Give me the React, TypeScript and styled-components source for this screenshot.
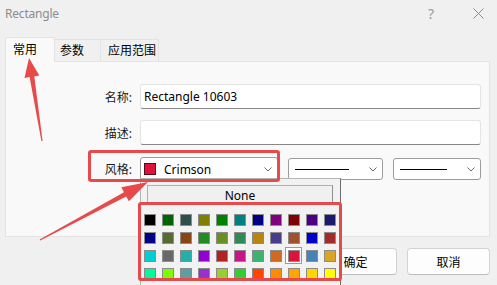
import styled, { createGlobalStyle } from "styled-components";

const GlobalStyle = createGlobalStyle`
  body {
    margin: 0;
    background: #f0f0f0;
    font-family: "Noto Sans", "Noto Sans CJK SC", sans-serif;
  }
`;

const PALETTE = [
  ["#000000", "#006400", "#2F4F4F", "#808000", "#008000", "#008080", "#000080", "#800080", "#800000", "#4B0082", "#191970"],
  ["#00008B", "#556B2F", "#8B4513", "#228B22", "#6B8E23", "#2E8B57", "#B8860B", "#483D8B", "#A0522D", "#0000CD", "#A52A2A"],
  ["#00CED1", "#696969", "#20B2AA", "#9400D3", "#B22222", "#C71585", "#3CB371", "#D2691E", "#DC143C", "#4682B4", "#DAA520"],
  ["#00FA9A", "#7CFC00", "#5F9EA0", "#9932CC", "#9ACD32", "#32CD32", "#FF4500", "#FF8C00", "#FFA500", "#FFD700", "#FFFF00"],
];
const SELECTED = "#DC143C";
const RED = "#e64a4a";

const Dialog = styled.div`
  position: relative;
  width: 497px;
  height: 285px;
  overflow: hidden;
  background: #f0f0f0;
  color: #000;
`;
const TitleBar = styled.div`
  height: 27px;
  display: flex;
  align-items: center;
  padding: 0 13px 0 5px;
`;
const Title = styled.span`
  flex: 1;
  font-size: 12px;
  letter-spacing: -0.2px;
  color: #8c8c8c;
`;
const HelpBtn = styled.span`
  width: 12px;
  margin-right: 36px;
  text-align: center;
  font-size: 14px;
  color: #9a9a9a;
`;
const TabRow = styled.div`
  display: flex;
  align-items: flex-end;
  height: 24px;
  margin-top: 10px;
  padding-left: 5px;
`;
const Tab = styled.div<{ $active?: boolean; $w: number; $pad: number }>`
  position: relative;
  box-sizing: border-box;
  width: ${(p) => p.$w}px;
  height: ${(p) => (p.$active ? 25 : 22)}px;
  margin-bottom: ${(p) => (p.$active ? -1 : 0)}px;
  margin-left: ${(p) => (p.$active ? 0 : -1)}px;
  padding-left: ${(p) => p.$pad}px;
  display: flex;
  align-items: center;
  border: 1px solid #e3e3e3;
  border-bottom: none;
  background: ${(p) => (p.$active ? "#f9f9f9" : "#f0f0f0")};
  z-index: ${(p) => (p.$active ? 1 : 0)};
  font-size: 12px;
  padding-bottom: ${(p) => (p.$active ? 3 : 1)}px;
`;
const Panel = styled.div`
  box-sizing: border-box;
  height: 176px;
  margin: 0 7px 0 5px;
  padding: 22px 10px 0 0;
  border: 1px solid #e3e3e3;
  background: #f9f9f9;
`;
const Form = styled.div`
  display: grid;
  grid-template-columns: 126px 1fr;
  column-gap: 8px;
  grid-template-rows: 25px 25px 26px;
  row-gap: 11px;
  & > :nth-child(4) {
    margin-bottom: -2px;
  }
`;
const Label = styled.label`
  align-self: center;
  text-align: right;
  font-size: 12px;
  color: #1a1a1a;
`;
const TextField = styled.div`
  box-sizing: border-box;
  height: 25px;
  padding: 0 0 0 3px;
  display: flex;
  align-items: center;
  background: #fff;
  border: 1px solid #e5e5e5;
  border-bottom-color: #868686;
  border-radius: 3px;
  font-size: 12px;
`;
const ComboRow = styled.div`
  display: flex;
  align-items: center;
  gap: 10px;
`;
const Combo = styled.div<{ $w: number; $h: number }>`
  box-sizing: border-box;
  width: ${(p) => p.$w}px;
  height: ${(p) => p.$h}px;
  display: flex;
  align-items: center;
  gap: 8px;
  padding: 0 5px 0 3px;
  background: #fff;
  border: 1px solid #9c9c9c;
  border-radius: 3px;
  font-size: 12px;
`;
const ComboSwatch = styled.span<{ $c: string }>`
  width: 12px;
  height: 12px;
  box-sizing: border-box;
  background: ${(p) => p.$c};
  border: 1px solid #5a0a18;
`;
const ComboText = styled.span`
  flex: 1;
`;
const LineSample = styled.span`
  flex: 1;
  height: 1px;
  margin: 0 12px 0 3px;
  background: #000;
`;
const ButtonRow = styled.div`
  display: flex;
  justify-content: flex-end;
  gap: 10px;
  margin-top: 11px;
  padding-right: 7px;
`;
const Button = styled.button`
  box-sizing: border-box;
  width: 83px;
  height: 27px;
  background: #fdfdfd;
  border: 1px solid #d3d3d3;
  border-bottom-color: #bdbdbd;
  border-radius: 4px;
  font-family: inherit;
  font-size: 12px;
  color: #000;
`;
const Popup = styled.div`
  position: absolute;
  left: 140px;
  top: 178px;
  width: 201px;
  height: 120px;
  box-sizing: border-box;
  padding: 6px 0 0 0;
  background: #f2f2f2;
  border: 1px solid #b4b4b4;
  border-right-color: #6e6e6e;
  z-index: 5;
`;
const NoneButton = styled.div`
  box-sizing: border-box;
  width: 186px;
  height: 19px;
  margin-left: 6px;
  display: flex;
  align-items: center;
  justify-content: center;
  background: #f0f0f0;
  border: 1px solid #b0b0b0;
  border-right-color: #8f8f8f;
  border-bottom: none;
  font-size: 12px;
`;
const Grid = styled.div`
  display: grid;
  grid-template-columns: repeat(11, 18px);
  grid-auto-rows: 18px;
  margin-top: 7px;
`;
const Cell = styled.div<{ $sel?: boolean }>`
  box-sizing: border-box;
  display: flex;
  align-items: center;
  justify-content: center;
  width: ${(p) => (p.$sel ? 17 : 18)}px;
  height: ${(p) => (p.$sel ? 17 : 18)}px;
  background: ${(p) => (p.$sel ? "#fff" : "transparent")};
  border: ${(p) => (p.$sel ? "1px solid #9a9a9a" : "none")};
`;
const Swatch = styled.span<{ $c: string }>`
  box-sizing: border-box;
  width: 12px;
  height: 12px;
  background: ${(p) => p.$c};
  border: 1px solid #8c8c8c;
`;
const Highlight = styled.div<{ $x: number; $y: number; $w: number; $h: number }>`
  position: absolute;
  left: ${(p) => p.$x}px;
  top: ${(p) => p.$y}px;
  width: ${(p) => p.$w}px;
  height: ${(p) => p.$h}px;
  box-sizing: border-box;
  border: 3px solid ${RED};
  border-radius: 3px;
  z-index: 8;
  pointer-events: none;
`;
const Annotations = styled.svg`
  position: absolute;
  left: 0;
  top: 0;
  z-index: 9;
  pointer-events: none;
`;

const Chevron = () => (
  <svg width="8" height="5" viewBox="0 0 8 5">
    <path d="M0.5 0.5 L4 4 L7.5 0.5" fill="none" stroke="#6a6a6a" strokeWidth="1" />
  </svg>
);

// tapered arrow from tail to tip
const arrow = (tx: number, ty: number, hx: number, hy: number, headLen: number, headW: number, shaftW: number) => {
  const dx = hx - tx;
  const dy = hy - ty;
  const len = Math.hypot(dx, dy);
  const ux = dx / len;
  const uy = dy / len;
  const px = -uy;
  const py = ux;
  const bx = hx - ux * headLen;
  const by = hy - uy * headLen;
  const pts = [
    [hx, hy],
    [bx + px * headW, by + py * headW],
    [bx + px * shaftW, by + py * shaftW],
    [tx + px * 0.6, ty + py * 0.6],
    [tx - px * 0.6, ty - py * 0.6],
    [bx - px * shaftW, by - py * shaftW],
    [bx - px * headW, by - py * headW],
  ];
  return pts.map((p) => p.map((v) => v.toFixed(1)).join(",")).join(" ");
};

export default function App() {
  return (
    <>
      <GlobalStyle />
      <Dialog>
        <TitleBar>
          <Title>Rectangle</Title>
          <HelpBtn>?</HelpBtn>
          <svg width="11" height="11" viewBox="0 0 11 11">
            <path d="M0.5 0.5 L10.5 10.5 M10.5 0.5 L0.5 10.5" stroke="#8a8a8a" strokeWidth="1" />
          </svg>
        </TitleBar>
        <TabRow>
          <Tab $active $w={50} $pad={7}>常用</Tab>
          <Tab $w={47} $pad={5}>参数</Tab>
          <Tab $w={59} $pad={7}>应用范围</Tab>
        </TabRow>
        <Panel>
          <Form>
            <Label>名称:</Label>
            <TextField>Rectangle 10603</TextField>
            <Label>描述:</Label>
            <TextField />
            <Label>风格:</Label>
            <ComboRow>
              <Combo $w={138} $h={25}>
                <ComboSwatch $c={SELECTED} />
                <ComboText>Crimson</ComboText>
                <Chevron />
              </Combo>
              <Combo $w={95} $h={22}>
                <LineSample />
                <Chevron />
              </Combo>
              <Combo $w={88} $h={22}>
                <LineSample />
                <Chevron />
              </Combo>
            </ComboRow>
          </Form>
        </Panel>
        <ButtonRow>
          <Button>确定</Button>
          <Button>取消</Button>
        </ButtonRow>

        <Popup>
          <NoneButton>None</NoneButton>
          <Grid>
            {PALETTE.flat().map((c) => (
              <Cell key={c} $sel={c === SELECTED}>
                <Swatch $c={c} />
              </Cell>
            ))}
          </Grid>
        </Popup>

        <Highlight $x={88} $y={150} $w={192} $h={32} />
        <Highlight $x={138} $y={202} $w={204} $h={79} />
        <Annotations width="497" height="285">
          <polygon points={arrow(42, 141, 29, 58, 19, 7.5, 2.4)} fill={RED} />
          <polygon points={arrow(40, 240, 148, 182, 26, 8, 2.4)} fill={RED} />
        </Annotations>
      </Dialog>
    </>
  );
}
